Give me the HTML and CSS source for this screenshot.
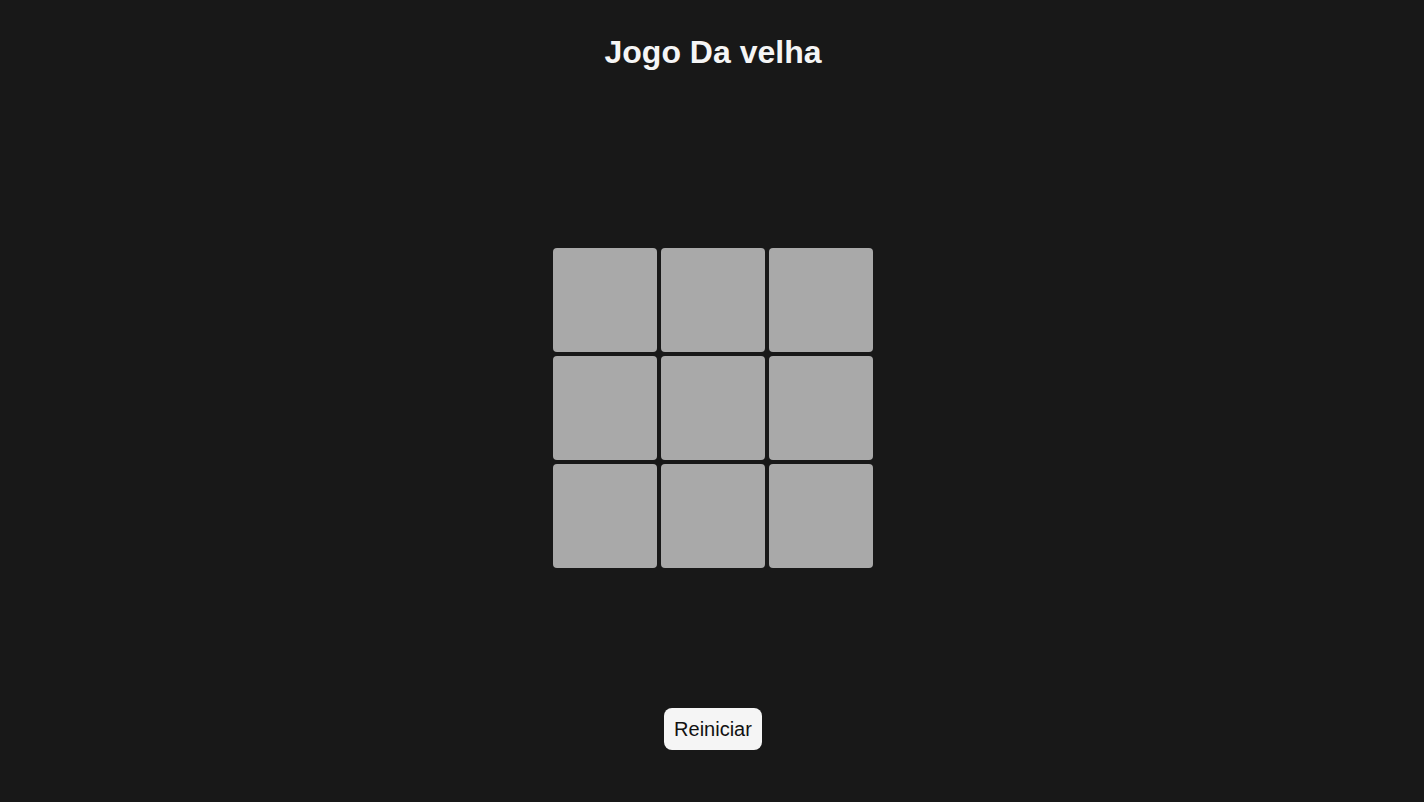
FILE: index.html
```html
<!DOCTYPE html>
<html lang="pt">
<head>
<meta charset="utf-8">
<title>Jogo Da velha</title>
<link rel="stylesheet" href="styles.css">
</head>
<body>
<main class="game">
  <h1 class="title">Jogo Da velha</h1>
  <div class="board">
    <div class="cell"></div><div class="cell"></div><div class="cell"></div>
    <div class="cell"></div><div class="cell"></div><div class="cell"></div>
    <div class="cell"></div><div class="cell"></div><div class="cell"></div>
  </div>
  <button class="restart">Reiniciar</button>
</main>
</body>
</html>
```

FILE: styles.css
```css
html, body {
  margin: 0;
  padding: 0;
  background: #181818;
  height: 100%;
}
body {
  font-family: "Liberation Sans", Arial, sans-serif;
  color: #f5f5f5;
}
.game {
  display: flex;
  flex-direction: column;
  align-items: center;
  padding-top: 34px;
  padding-left: 2px;
}
.title {
  margin: 0;
  font-size: 32px;
  font-weight: bold;
  line-height: 37px;
  color: #f5f5f5;
}
.board {
  margin-top: 177px;
  display: grid;
  grid-template-columns: repeat(3, 104px);
  grid-auto-rows: 104px;
  gap: 4px;
}
.cell {
  background: #a9a9a9;
  border-radius: 4px;
}
.restart {
  margin-top: 140px;
  width: 98px;
  height: 42px;
  padding: 0;
  border: none;
  border-radius: 8px;
  background: #f5f5f5;
  color: #111;
  font-family: "Liberation Sans", Arial, sans-serif;
  font-size: 20px;
}
```
